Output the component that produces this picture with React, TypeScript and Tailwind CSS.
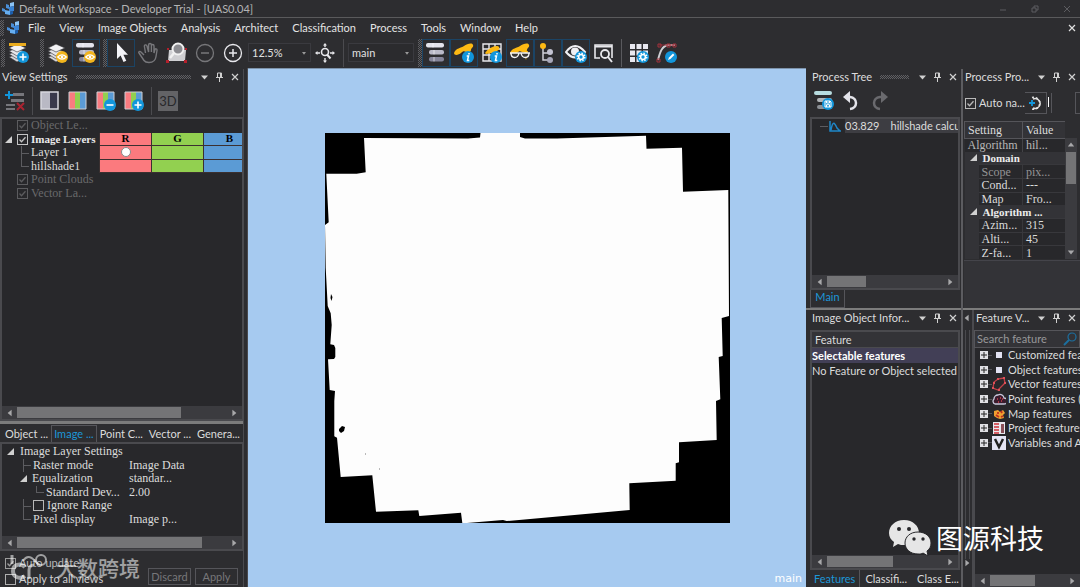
import type { ReactNode } from 'react';

const menus = ['File', 'View', 'Image Objects', 'Analysis', 'Architect', 'Classification', 'Process', 'Tools', 'Window', 'Help'];

const BLUE = '#1296db';

function Logo({ className = '' }: { className?: string }) {
  return (
    <svg viewBox="0 0 14 14" className={`shrink-0 ${className}`}>
      <path d="M4 2l3 1v4l-3-1zM0 6l3 1v3L0 9z" fill="#4a8fd8" />
      <path d="M8 1l4-1v4L8 5z" fill="#8cc4f5" />
      <path d="M7 5l5-1v5L7 10z" fill="#3a84d6" />
      <path d="M3 8l5 1v4l-5-1z" fill="#66aef0" />
      <path d="M8 10l3-1v3l-3 1z" fill="#1c5fae" />
    </svg>
  );
}

function Badge({ x, y, kind }: { x: number; y: number; kind: 'plus' | 'minus' | 'info' | 'gear' | 'pen' | 'eye' | 'save' }) {
  return (
    <g transform={`translate(${x} ${y})`}>
      <circle r="6" fill={kind === 'eye' ? '#f2b51d' : BLUE} />
      {kind === 'plus' && <path d="M-3.5 0h7M0-3.5v7" stroke="#fff" strokeWidth="1.6" />}
      {kind === 'minus' && <path d="M-3.5 0h7" stroke="#fff" strokeWidth="1.6" />}
      {kind === 'info' && <path d="M1-4v1.6M-1.3-1h1.8L-.5 3.4h1.8" stroke="#fff" strokeWidth="1.5" fill="none" />}
      {kind === 'gear' && (
        <>
          <circle r="2.4" fill="none" stroke="#fff" strokeWidth="1.5" />
          <circle r="3.8" fill="none" stroke="#fff" strokeWidth="1.4" strokeDasharray="1.5 1.48" />
        </>
      )}
      {kind === 'pen' && <path d="M-3 3l1-2.4L2-3.4 3.4-2-.6 2z" fill="#fff" />}
      {kind === 'eye' && (
        <>
          <path d="M-4.3 0Q0-4.4 4.3 0 0 4.4-4.3 0z" fill="none" stroke="#fff" strokeWidth="1.2" />
          <circle r="1.3" fill="#fff" />
        </>
      )}
      {kind === 'save' && <path d="M-3-3h5l1 1v5h-6zM-1.5-3v2h3v-2M-1.5 3V.7h3V3" fill="none" stroke="#fff" />}
    </g>
  );
}

function Icon({ children, className = '' }: { children: ReactNode; className?: string }) {
  return (
    <svg viewBox="0 0 22 22" className={`size-[22px] shrink-0 ${className}`} fill="none">
      {children}
    </svg>
  );
}

function Layers({ top }: { top?: boolean }) {
  return (
    <>
      <path d="M1 15l8-3 8 4-8 4z" fill="#d5d5da" stroke="#2d2d30" strokeWidth=".6" />
      <path d="M1 12l8-3 8 4-8 4z" fill="#dedee3" stroke="#2d2d30" strokeWidth=".6" />
      <path d="M1 9l8-3 8 4-8 4z" fill="#e6e6ea" stroke="#2d2d30" strokeWidth=".6" />
      <path d="M1 6l8-4 9 4-9 4z" fill="#f2f2f5" stroke="#2d2d30" strokeWidth=".6" />
      {top && <path d="M1 1h17v3H1z" fill="#e9ab1e" />}
    </>
  );
}

function Bars() {
  return (
    <>
      <rect x="1" y="1" width="18" height="4.5" rx="2" fill="#e4e4ec" />
      <rect x="4" y="8" width="15" height="4.5" rx="2" fill="#b9b9c8" />
      <rect x="4" y="15" width="15" height="4.5" rx="2" fill="#85859a" />
      <path d="M8 1v4.5M9 8v4.5M9 15v4.5" stroke="#fff" strokeOpacity=".6" />
    </>
  );
}

const brush = <path d="M1 11C3 6 8 6 11 4s8-4 9-1c1 2-2 3-2 5s-3 3-5 2-3-1-5 1-7 3-7 0z" fill="#fdb913" />;

const icons = {
  addLayers: <><Layers top /><Badge x={15} y={15} kind="plus" /></>,
  viewLayers: <><Layers /><Badge x={15} y={15} kind="eye" /></>,
  viewBars: <><Bars /><Badge x={15} y={15} kind="eye" /></>,
  cursor: <path d="M7 1v16l3.6-3.4L13.5 20l2.8-1.3-2.9-6H18z" fill="#f4f4f8" />,
  hand: (
    <path
      d="M6 13l-3-3c-1-1.3-3-.3-2 1l5 7.500c1 1.500 2.500 2 5 2 4 0 6.500-2 7-6l1-6c.3-2-1.800-2.300-2.200-.5L16 11V4c0-2-2.600-2-2.600 0v6V3c0-2-2.800-2-2.800 0v7L9 4c-.4-1.800-2.900-1.300-2.600.5L7.500 11"
      stroke="#77777b"
      strokeWidth="1.4"
    />
  ),
  zoomBox: (
    <>
      <path d="M3 8h17l-1 11H2z" fill="#cfcfd2" />
      <circle cx="12" cy="7" r="5.5" stroke="#f1f1f1" strokeWidth="2" fill="#8b8b90" />
      <path d="M8 11l-4 5" stroke="#f1f1f1" strokeWidth="2.5" />
      <path d="M1 6h2v2H1zM19 6h2v2h-2zM0 18h3v3H0zM18 18h3v3h-3z" fill="#b3202c" />
    </>
  ),
  zoomOut: <><circle cx="11" cy="11" r="8.5" stroke="#77777a" strokeWidth="1.3" /><path d="M7 11h8" stroke="#77777a" strokeWidth="1.5" /></>,
  zoomIn: <><circle cx="11" cy="11" r="8.5" stroke="#e8e8ec" strokeWidth="1.3" /><path d="M7 11h8M11 7v8" stroke="#e8e8ec" strokeWidth="1.5" /></>,
  pan: (
    <>
      <circle cx="11" cy="10" r="3.5" stroke="#e8e8ec" strokeWidth="1.6" />
      <path d="M13 12.500l3.500 4" stroke="#e8e8ec" strokeWidth="2" />
      <path d="M11 1l2 2.500H9zM11 21l2-2.500H9zM1 11l2.500-2v4zM21 11l-2.500-2v4z" fill="#e8e8ec" />
      <path d="M11 3v2M11 16v3M3 11h3M16 11h3" stroke="#e8e8ec" strokeWidth="1.4" />
    </>
  ),
  bars: <Bars />,
  brushInfo: <>{brush}<Badge x={15} y={15} kind="info" /></>,
  gridInfo: (
    <>
      <path d="M2 2h18v17H2zM2 7h18M2 13h18M8 2v17M14 2v17" stroke="#e8e8ec" strokeWidth="1.4" />
      <path d="M4 11C7 6 16 2 18 5s-4 6-13 7z" fill="#fdb913" />
      <Badge x={15} y={15} kind="info" />
    </>
  ),
  brushGlasses: (
    <>
      {brush}
      <path d="M15 9l2 9 2-9z" fill="#fdb913" />
      <path d="M1 11h20M2 11c0 6 7 6 8 0M12 11c1 6 8 6 8 0" stroke="#f4f4f4" strokeWidth="1.4" fill="#3a3936" />
    </>
  ),
  tree: (
    <>
      <path d="M6 5v13h8M6 11h8" stroke="#d0d0d8" strokeWidth="1.5" />
      <circle cx="6" cy="4" r="3" fill="#fdb913" />
      <circle cx="13" cy="10" r="3" fill="#c3c3d2" />
      <circle cx="13" cy="18" r="3" fill="#a8a8ba" />
    </>
  ),
  eyeGear: (
    <>
      <path d="M1 10Q10-2 20 10 10 21 1 10z" stroke="#f0f0f4" strokeWidth="2" />
      <circle cx="10" cy="9.5" r="4" fill="#f0f0f4" />
      <Badge x={16} y={15} kind="gear" />
    </>
  ),
  windowSearch: (
    <>
      <path d="M7 16H2V3h17v13" stroke="#e8e8ec" strokeWidth="1.6" />
      <path d="M2 4.500h17" stroke="#e8e8ec" strokeWidth="2" />
      <circle cx="12" cy="12" r="4" stroke="#e8e8ec" strokeWidth="1.8" />
      <path d="M15 15l4 5" stroke="#e8e8ec" strokeWidth="2" />
    </>
  ),
  gridGear: (
    <>
      <path d="M2 2h5v5H2zM8.500 2h5v5h-5zM15 2h5v5h-5zM2 8.500h5v5H2zM8.500 8.500h5v5h-5zM15 8.500h5v5h-5zM2 15h5v5H2zM8.500 15h5v5h-5z" fill="#e8e8f0" />
      <Badge x={15} y={15} kind="gear" />
    </>
  ),
  curve: (
    <>
      <path d="M2 18C4 10 6 4 12 3h7" stroke="#cfcfd4" strokeWidth="2" />
      <path d="M3 3h16" stroke="#8d2b34" />
      <path d="M2 2h3v3H2zM11 2h3v3h-3zM17 2h3v3h-3zM1 17h3v3H1z" stroke="#a5323c" />
      <Badge x={15} y={15} kind="pen" />
    </>
  ),
  editRows: (
    <>
      <path d="M9 3h11v3H9zM7 9h13v3H7zM2 14h9v2H2zM2 18h9v2H2z" fill="#77777c" />
      <path d="M1 5h8M5 1v8" stroke={BLUE} strokeWidth="2" />
      <path d="M13 13l7 7M20 13l-7 7" stroke="#a92330" strokeWidth="2" />
    </>
  ),
  halfGrey: <><path d="M2 2h9v17H2z" fill="#b9b9c4" /><path d="M11 2h8v17h-8z" fill="#3a3a4c" /><path d="M2 2h17v17H2z" stroke="#d8d8de" strokeWidth="1.5" /></>,
  rgb: <Rgb />,
  rgbMinus: <><Rgb /><Badge x={15} y={15} kind="minus" /></>,
  rgbPlus: <><Rgb /><Badge x={15} y={15} kind="plus" /></>,
  barsSave: (
    <>
      <rect x="1" y="1" width="18" height="4" rx="2" fill="#b7dce0" />
      <rect x="4" y="8" width="15" height="4" rx="2" fill="#b0b4b8" />
      <rect x="4" y="15" width="12" height="4" rx="2" fill="#8c9096" />
      <Badge x={15} y={14} kind="save" />
    </>
  ),
  undo: <><path d="M9 19c8-1 8-11 0-12H5" stroke="#e4e4ea" strokeWidth="2.5" /><path d="M9 1v12L2 7z" fill="#e4e4ea" /></>,
  redo: <><path d="M11 19c-8-1-8-11 0-12h4" stroke="#6a6a6e" strokeWidth="2.5" /><path d="M12 1v12l7-6z" fill="#6a6a6e" /></>,
};

type IconName = keyof typeof icons;

function Rgb() {
  return (
    <>
      <path d="M2 2h6v17H2z" fill="#f97b80" />
      <path d="M8 2h5v17H8z" fill="#92d050" />
      <path d="M13 2h6v17h-6z" fill="#5b9bd5" />
      <path d="M2 2h17v17H2z" stroke="#cfcfd4" />
    </>
  );
}

function ToolButton({ name, on = false, label }: { name: IconName; on?: boolean; label: string }) {
  return (
    <button type="button" aria-label={label} className={`flex h-7 w-7 shrink-0 items-center justify-center border ${on ? 'border-[#1b4465]' : 'border-transparent'}`}>
      <Icon>{icons[name]}</Icon>
    </button>
  );
}

function Dots({ className = '' }: { className?: string }) {
  return <span className={`bg-[conic-gradient(#606064_25%,transparent_0_50%,#606064_0_75%,transparent_0)] bg-[size:2px_2px] ${className}`} />;
}

function Grip() {
  return <Dots className="h-7 w-1 shrink-0" />;
}

function Combo({ value, label, className = '' }: { value: string; label: string; className?: string }) {
  return (
    <span className={`relative mt-1 flex h-[19px] shrink-0 border border-[#3a3a3f] bg-[#2b2b2e] ${className}`}>
      <select aria-label={label} defaultValue={value} className="w-full appearance-none bg-transparent pl-[3px] leading-4 text-[#e0e0e0]">
        <option>{value}</option>
      </select>
      <svg viewBox="0 0 6 4" className="pointer-events-none absolute top-2 right-1 w-1">
        <path d="M0 0h6L3 4z" fill="#9a9a9a" />
      </svg>
    </span>
  );
}

function PanelHeader({ title, dots = false }: { title: string; dots?: boolean }) {
  return (
    <header className="flex h-4 shrink-0 items-center pr-[3px] pl-[2px]">
      <h2 className="whitespace-nowrap">{title}</h2>
      <span className="flex h-1 min-w-0 flex-1">{dots && <Dots className="mx-2 flex-1" />}</span>
      <span className="flex shrink-0 gap-1">
        <button type="button" aria-label="Menu">
          <svg viewBox="0 0 11 10" className="w-[11px]"><path d="M2 3.500h7L5.500 7.500z" fill="#d0d0d0" /></svg>
        </button>
        <button type="button" aria-label="Pin">
          <svg viewBox="0 0 11 10" className="w-[11px]" fill="none" stroke="#d0d0d0"><path d="M3.500 1h4v4.500h-4zM2 5.500h7M5.500 5.500V10M6.500 1v4.500" /></svg>
        </button>
        <button type="button" aria-label="Close">
          <svg viewBox="0 0 11 10" className="w-[11px]" fill="none" stroke="#d0d0d0" strokeWidth="1.2"><path d="M3 2l6 6M9 2L3 8" /></svg>
        </button>
      </span>
    </header>
  );
}

function Arrow({ dir }: { dir: 'left' | 'right' | 'up' | 'down' }) {
  const d = { left: 'M7 1L2 5l5 4z', right: 'M3 1l5 4-5 4z', up: 'M1 7l4-5 4 5z', down: 'M1 3l4 5 4-5z' }[dir];
  return <svg viewBox="0 0 10 10" className="size-2 shrink-0"><path d={d} fill="#a8a8aa" /></svg>;
}

function HScroll({ thumb }: { thumb: string }) {
  return (
    <div className="flex h-[13px] shrink-0 items-center gap-[3px] bg-[#3b3b3f] px-1">
      <Arrow dir="left" />
      <div className="h-[11px] flex-1"><div className={`h-full bg-[#747476] ${thumb}`} /></div>
      <Arrow dir="right" />
    </div>
  );
}

function Tick({ label, checked = false, className = '' }: { label: string; checked?: boolean; className?: string }) {
  return (
    <label className={`flex items-center gap-[3px] whitespace-nowrap ${className}`}>
      <span className="relative flex size-[11px] shrink-0 opacity-80">
        <input type="checkbox" defaultChecked={checked} className="peer size-[11px] appearance-none border border-current" />
        <svg viewBox="0 0 11 11" className="pointer-events-none absolute inset-0 hidden peer-checked:block" fill="none" stroke="currentColor" strokeWidth="1.3">
          <path d="M2.500 5.500l2 2.200 4-4.500" />
        </svg>
      </span>
      {label}
    </label>
  );
}

function Caret() {
  return <svg viewBox="0 0 7 7" className="size-[7px] shrink-0"><path d="M7 0v7H0z" fill="#d0d0d0" /></svg>;
}

// connector line of a tree row; the last row of a branch ends at its middle
function Branch({ last = false }: { last?: boolean }) {
  return (
    <span className="relative h-full w-[10px] shrink-0">
      <span className={`absolute top-0 left-0 border-l border-[#5c5c60] ${last ? 'h-1/2' : 'h-full'}`} />
      <span className="absolute top-1/2 left-0 w-2 border-t border-[#5c5c60]" />
    </span>
  );
}

function LayerRow({ head, children, dot }: { head?: boolean; children: ReactNode; dot?: boolean }) {
  const cell = 'flex w-[52px] shrink-0 items-center justify-center border-b border-l border-[#3b3030] text-[11px] font-bold text-black';
  return (
    <div className="flex flex-1 overflow-hidden">
      <div className="flex w-[97px] shrink-0 items-center overflow-hidden whitespace-nowrap">{children}</div>
      <div className={`${cell} bg-[#fb7a7e]`}>
        {head && 'R'}
        {dot && <input type="radio" name="red" aria-label="Layer 1 red" defaultChecked className="size-[10px] appearance-none rounded-full border border-[#8a8a8a] bg-white" />}
      </div>
      <div className={`${cell} bg-[#92d050]`}>{head && 'G'}</div>
      <div className={`${cell} bg-[#5b9bd5]`}>{head && 'B'}</div>
    </div>
  );
}

function ViewSettings() {
  const tabs = ['Object ...', 'Image ...', 'Point C...', 'Vector ...', 'Genera...'];
  return (
    <aside className="flex w-[244px] shrink-0 flex-col border-r border-[#4a4a4e]">
      <PanelHeader title="View Settings" dots />
      <div className="flex h-8 shrink-0 items-center pl-px">
        <ToolButton name="editRows" label="Edit layers" />
        <span className="mx-[3px] h-7 border-l border-[#4b4b4f]" />
        <ToolButton name="halfGrey" label="Single layer" />
        <ToolButton name="rgb" label="Mix layers" />
        <ToolButton name="rgbMinus" label="Previous layer" />
        <ToolButton name="rgbPlus" label="Next layer" />
        <span className="mx-[3px] h-7 border-l border-[#4b4b4f]" />
        <button type="button" className="ml-[3px] size-5 bg-[#636366] text-[13px] leading-5 text-[#28282b]">3D</button>
      </div>
      <section className="flex flex-1 flex-col border-2 border-r border-[#4a4a4e] bg-[#28282b]">
        <div className="flex h-[81px] shrink-0 flex-col font-['Liberation_Serif',serif] text-[12px] leading-[13px]">
          <div className="flex flex-1 items-center pl-[15px] text-[#6a6a6c]"><Tick label="Object Le..." checked /></div>
          <LayerRow head>
            <span className="flex w-[15px] pl-[3px]"><Caret /></span>
            <Tick label="Image Layers" checked className="text-[11px] font-bold text-[#ececec]" />
          </LayerRow>
          <LayerRow dot><span className="w-[19px] shrink-0" /><Branch />Layer 1</LayerRow>
          <LayerRow><span className="w-[19px] shrink-0" /><Branch last />hillshade1</LayerRow>
          <div className="flex flex-1 items-center pl-[15px] text-[#6a6a6c]"><Tick label="Point Clouds" checked /></div>
          <div className="flex flex-1 items-center pl-[15px] text-[#6a6a6c]"><Tick label="Vector La..." checked /></div>
        </div>
        <div className="flex-1" />
        <HScroll thumb="w-[78%]" />
      </section>
      <div className="h-[3px] shrink-0 bg-[#7c7c7c]" />
      <div role="tablist" className="flex h-[18px] shrink-0 pt-px pl-[2px] whitespace-nowrap">
        {tabs.map((tab, i) => (
          <button
            key={tab}
            type="button"
            role="tab"
            aria-selected={i === 1}
            className={`flex-auto border border-b-0 ${i === 1 ? 'border-[#55555a] text-[#1c97d8]' : 'border-transparent'}`}
          >
            {tab}
          </button>
        ))}
      </div>
      <section className="flex h-[109px] shrink-0 flex-col border-2 border-r border-[#4a4a4e] bg-[#28282b]">
        <div className="mt-px flex h-[81px] flex-col font-['Liberation_Serif',serif] text-[12px] leading-[13px] whitespace-nowrap">
          <div className="flex flex-1 items-center gap-[6px] pl-[5px]"><Caret />Image Layer Settings</div>
          <div className="flex flex-1 items-center pl-[21px]"><Branch /><span className="w-24">Raster mode</span>Image Data</div>
          <div className="flex flex-1 items-center gap-[3px] pl-[18px]"><Caret /><span className="ml-[2px] w-[94px]">Equalization</span>standar...</div>
          <div className="flex flex-1 items-center pl-[34px]"><Branch last /><span className="w-[83px]">Standard Dev...</span>2.00</div>
          <div className="flex flex-1 items-center pl-[21px]"><Branch /><Tick label="Ignore Range" /></div>
          <div className="flex flex-1 items-center pl-[21px]"><Branch last /><span className="w-24">Pixel display</span>Image p...</div>
        </div>
        <div className="flex-1" />
        <HScroll thumb="w-[88%]" />
      </section>
      <footer className="relative flex h-9 shrink-0 items-end gap-1 pr-[5px] pl-[5px]">
        <div className="flex flex-1 flex-col">
          <Tick label="Auto update" checked className="text-[#b8b8b8]" />
          <Tick label="Apply to all views" className="text-[#d0d0d0]" />
        </div>
        <button type="button" className="mb-[2px] h-[17px] w-[43px] border border-[#55555a] leading-[15px] text-[#77777a]">Discard</button>
        <button type="button" className="mb-[2px] h-[17px] w-[43px] border border-[#55555a] leading-[15px] text-[#77777a]">Apply</button>
        <div className="pointer-events-none absolute top-[2px] left-[10px] flex items-center gap-2 text-white/55">
          <svg viewBox="0 0 38 26" className="w-[38px]" fill="none" stroke="currentColor">
            <path d="M2 1v9" strokeWidth="3" />
            <path d="M15 13C10 8 3 11 3 17s7 9 12 5" strokeWidth="4" />
            <path d="M19 25v-9q0-5 5-5" strokeWidth="3" />
            <circle cx="31" cy="6" r="5" strokeWidth="2" />
            <path d="M13 7q5-8 12 0 2 3 5 4" strokeWidth="2" />
          </svg>
          <span className="font-['Noto_Sans_CJK_SC',sans-serif] text-[21px] leading-7 font-medium">大数跨境</span>
        </div>
      </footer>
    </aside>
  );
}

function MapView() {
  return (
    <main className="relative flex min-w-0 flex-1 items-center justify-center border-t border-[#7d93ab] bg-[#a6caf0]">
      <svg viewBox="0 0 405 390" className="w-[405px]">
        <path d="M0 0h405v390H0z" fill="#000" />
        <path
          fill="#fdfdfd"
          d="M39 5L143 5.500 155 4.500 155.500 0H195V4L200 5.500H232L321 2.700 321.500 15.700 357 14.700 358 58.700 403.300 57 404 183 396.700 185 397.700 223 393.700 224 395.300 266.300 391 268 391.700 307 354 309.300V329.300L350.700 330.300V347.700L304.300 350.300 304.700 377 181.700 388 178 387 142 390H137.300L136 379.700 94.300 383 93.300 377.300 51 378.700 47.300 342.300 15.700 344 12 304.700 9.300 303.300V268L10 258 4.700 257 3 226.300 9 226 10.300 224V215L9 212 5.300 211.300 6.700 192 5.700 180.300 2.700 173 .7 135 0 92 3.700 89.300 1.300 40.700H31.700L40.700 39.300z"
        />
        <path d="M6 161l1.500 3-1 4-1-3zM14 296l3-3 3 1-1 4-3 2-2-2z" fill="#000" />
        <path d="M40 321h1M54 336h1" stroke="#777" />
      </svg>
      <span className="absolute right-1 bottom-0 font-['DejaVu_Sans',sans-serif] text-[11px] leading-4 text-white">main</span>
    </main>
  );
}

function ProcessTree() {
  return (
    <section className="flex h-[239px] shrink-0 flex-col pl-1">
      <PanelHeader title="Process Tree" dots />
      <div className="flex h-8 shrink-0 items-center">
        <ToolButton name="barsSave" label="Save rule set" />
        <ToolButton name="undo" label="Undo" />
        <ToolButton name="redo" label="Redo" />
      </div>
      <div className="mr-px flex flex-1 flex-col border-2 border-[#4a4a4e] bg-[#28282b]">
        <div className="flex h-[14px] items-center overflow-hidden whitespace-nowrap">
          <span className="ml-2 w-2 shrink-0 border-t border-[#5c5c60]" />
          <svg viewBox="0 0 12 11" className="ml-px w-3 shrink-0" fill="none" stroke="#1e86c8" strokeWidth="1.5"><path d="M1 0v10h11M2 9c2-11 4-6 6-2l3 3" /></svg>
          <span className="ml-1 flex flex-1 gap-[11px] bg-[#3d3d42] leading-[14px]"><span>03.829</span><span>hillshade calcu</span></span>
        </div>
        <div className="flex-1" />
        <HScroll thumb="w-1/3" />
      </div>
      <button type="button" className="h-[18px] w-[35px] shrink-0 border border-t-0 border-[#55555a] pb-1 leading-[13px] text-[#1c97d8]">Main</button>
    </section>
  );
}

function ObjectInfo() {
  return (
    <section className="flex min-h-0 flex-1 flex-col border-t-2 border-[#7c7c7c] pl-1">
      <PanelHeader title="Image Object Infor..." />
      <div className="mt-1 mr-px flex flex-1 flex-col overflow-hidden border-2 border-[#4a4a4e] bg-[#28282b]">
        <table className="w-full text-left leading-[15px] whitespace-nowrap">
          <thead><tr><th className="border-b border-[#4a4a4e] bg-[#333337] pl-[3px] font-normal">Feature</th></tr></thead>
          <tbody>
            <tr><td className="bg-[#423f56] font-bold text-white">Selectable features</td></tr>
            <tr><td>No Feature or Object selected</td></tr>
          </tbody>
        </table>
        <div className="flex-1" />
        <HScroll thumb="w-[57%]" />
      </div>
      <div role="tablist" className="flex h-[17px] shrink-0 whitespace-nowrap">
        <button type="button" role="tab" aria-selected className="border-r border-[#55555a] px-1 text-[#1c97d8]">Features</button>
        <button type="button" role="tab" aria-selected={false} className="px-[5px]">Classifi...</button>
        <button type="button" role="tab" aria-selected={false} className="px-[5px]">Class E...</button>
      </div>
    </section>
  );
}

const props: { name: string; value?: string; group?: boolean; dim?: boolean }[] = [
  { name: 'Domain', group: true },
  { name: 'Scope', value: 'pix...', dim: true },
  { name: 'Cond...', value: '---' },
  { name: 'Map', value: 'Fro...' },
  { name: 'Algorithm ...', group: true },
  { name: 'Azim...', value: '315' },
  { name: 'Alti...', value: '45' },
  { name: 'Z-fa...', value: '1' },
];

function ProcessProperties() {
  return (
    <section className="flex h-[239px] shrink-0 flex-col">
      <PanelHeader title="Process Pro..." />
      <div className="flex h-9 shrink-0 items-center overflow-hidden pl-[2px]">
        <Tick label="Auto na..." checked />
        <button type="button" aria-label="Edit algorithm" className="flex h-[22px] w-[22px] shrink-0 items-center justify-center border border-l-0 border-[#55555a]">
          <svg viewBox="0 0 14 14" className="w-[14px]" fill="none">
            <path d="M5 3a5 5 0 1 1 0 9" stroke="#e4e4e4" strokeWidth="1.5" />
            <path d="M4 1.500a6 6 0 1 1 0 11.500" stroke="#e4e4e4" strokeWidth="1.5" strokeDasharray="2 2" />
            <path d="M1 7h6M4 4v6" stroke={BLUE} strokeWidth="1.8" />
          </svg>
        </button>
        <span className="flex h-5 w-[5px] border-r border-[#55555a] pt-1"><span className="ml-px h-[10px] border-l border-white" /></span>
        <span className="ml-auto h-[22px] w-[5px] border border-r-0 border-[#55555a]" />
      </div>
      <div className="ml-px flex font-['Liberation_Serif',serif] text-[12px] leading-3 whitespace-nowrap">
        <table className="h-[138px] w-0 flex-1 table-fixed text-left">
          <colgroup>
            <col className="w-[14px]" />
            <col className="w-11" />
            <col />
          </colgroup>
          <thead>
            <tr className="h-[17px]">
              <th colSpan={2} className="border border-[#55555a] bg-[#333337] pl-[3px] font-normal">Setting</th>
              <th className="border border-r-0 border-[#55555a] bg-[#333337] pl-[3px] font-normal">Value</th>
            </tr>
          </thead>
          <tbody>
            <tr className="bg-[#28282b] text-[#b8b8b8]"><td colSpan={2} className="pl-[3px]">Algorithm</td><td className="border-l border-[#444448] pl-[3px]">hil...</td></tr>
            {props.map((p) =>
              p.group ? (
                <tr key={p.name} className="bg-[#333337] font-bold text-[#ececec]">
                  <td colSpan={3}><span className="flex items-center gap-[6px] pl-[5px] text-[11px]"><Caret />{p.name}</span></td>
                </tr>
              ) : (
                <tr key={p.name} className={p.dim ? 'bg-[#28282b] text-[#949496]' : 'bg-[#28282b]'}>
                  <td className="bg-[#333337]" />
                  <td className="border-t border-[#38383c] pl-[3px]">{p.name}</td>
                  <td className="border-t border-l border-[#38383c] pl-[3px]">{p.value}</td>
                </tr>
              ),
            )}
          </tbody>
        </table>
        <div className="mt-[17px] mr-[3px] flex w-3 shrink-0 flex-col items-center bg-[#3b3b3f] py-[3px]">
          <Arrow dir="up" />
          <div className="mt-[3px] h-8 w-[10px] bg-[#747476]" />
          <div className="flex-1" />
          <Arrow dir="down" />
        </div>
      </div>
      <div className="mt-px ml-px flex-1 border-t border-[#44444a] bg-[#333337]" />
    </section>
  );
}

const featureIcons: ReactNode[] = [
  <path key="a" d="M4 4h6v6H4z" fill="#e2e2f2" />,
  <path key="b" d="M4 4h6v6H4z" fill="#e2e2f2" />,
  <g key="c"><path d="M6 2l6-1 1 5-7 7-5-2 1-6z" stroke="#c04048" strokeWidth="1.3" /><path d="M5 1h2v2H5zM11 0h2v2h-2zM12 5h2v2h-2zM6 12h2v2H6zM0 10h2v2H0zM1 5h2v2H1z" fill="#e05058" /></g>,
  <g key="d"><path d="M3 12a3 3 0 0 1-1-5 4 4 0 0 1 4-4 4 4 0 0 1 6 3 3 3 0 0 1 0 6z" stroke="#c8c8dc" strokeWidth="1.3" fill="#3a1c2c" /><path d="M5 7h1M8 6h1M6 10h1M9 9h1M10 7h1" stroke="#d04050" strokeWidth="1.5" /></g>,
  <g key="e"><path d="M2 4l4-1 2 2 3-2 2 3-2 2 1 3-4 1-3-1-3-2z" fill="#f0a030" /><path d="M4 8l3 2M9 4l1 2M6 5v2M11 9l-2 1" stroke="#c03020" strokeWidth="1.8" /></g>,
  <g key="f"><path d="M1 1h12v12H1z" fill="#e8e8ee" /><path d="M2 3h5M2 6h5M2 9h5M2 12h5" stroke="#d03038" strokeWidth="1.5" /><path d="M9 3h3v9H9z" fill="#8a5058" /></g>,
  <g key="g"><path d="M0 0h14v14H0z" fill="#e4e4f4" /><path d="M3 3l4 8 4-8" stroke="#222" strokeWidth="2.5" /></g>,
];

const features = ['Customized features', 'Object features', 'Vector features', 'Point features (Point clouds)', 'Map features', 'Project features', 'Variables and Arrays'];

function FeatureView() {
  return (
    <div className="flex min-h-0 flex-1 border-t-2 border-[#7c7c7c]">
      <div className="flex w-[11px] shrink-0 flex-col border-r-2 border-[#4a4a4e] pt-1">
        <Arrow dir="left" />
        <span className="mx-[2px] mt-2 flex-1 border-x border-[#4a4a4e]" />
        <Arrow dir="right" />
        <span className="h-5 shrink-0" />
      </div>
      <section className="flex min-w-0 flex-1 flex-col">
        <PanelHeader title="Feature V..." />
        <label className="mt-1 flex h-[18px] shrink-0 items-center border border-[#55555a] bg-[#333337] px-[2px]">
          <input type="text" aria-label="Search feature" placeholder="Search feature" className="min-w-0 flex-1 bg-transparent placeholder:text-[#98989a]" />
          <svg viewBox="0 0 14 14" className="w-[14px]" fill="none" stroke="#1c6f9f"><circle cx="9" cy="5" r="4" strokeWidth="1.2" /><path d="M6 8l-5 5" strokeWidth="2" /></svg>
        </label>
        <div className="flex flex-1 flex-col overflow-hidden border-l border-[#4a4a4e] bg-[#28282b]">
          <ul className="flex h-[102px] shrink-0 flex-col leading-[14px]">
            {features.map((name, i) => (
              <li key={name} className="flex min-h-0 flex-1 items-center whitespace-nowrap">
                <svg viewBox="0 0 8 8" className="ml-[5px] size-2 shrink-0"><path d="M0 0h8v8H0z" fill="#e0e0e4" /><path d="M4 1v6M1 4h6" stroke="#222" /></svg>
                <span className="w-1 shrink-0 border-t border-[#55555a]" />
                <svg viewBox="0 0 14 14" className="mr-[2px] size-[14px] shrink-0" fill="none">{featureIcons[i]}</svg>
                {name}
              </li>
            ))}
          </ul>
          <div className="flex-1" />
          <HScroll thumb="w-[60%]" />
        </div>
      </section>
    </div>
  );
}

export default function App() {
  return (
    <div className="relative flex h-screen flex-col overflow-hidden bg-[#2d2d30] font-['Lato','Open_Sans',sans-serif] text-[11px] leading-4 text-[#dcdcdc]">
      <header className="flex h-[18px] shrink-0 items-center border-b border-[#5a5a5c] pr-2 pl-[2px] text-[#b4b4b4]">
        <Logo className="w-[14px]" />
        <h1 className="ml-[3px] flex-1">Default Workspace - Developer Trial - [UAS0.04]</h1>
        <svg viewBox="0 0 74 8" className="w-[74px]" fill="none" stroke="#5c5c60"><path d="M2 5h6M34 3h4v4h-4zM36 3V1h4v4h-2M66 1l6 6M72 1l-6 6" /></svg>
      </header>
      <nav className="flex h-[19px] shrink-0 items-center pr-1">
        <Dots className="h-4 w-1" />
        <Logo className="ml-[3px] w-[14px]" />
        <div className="ml-[7px] flex flex-1 gap-[14px] text-[#e4e4e4]">
          {menus.map((m) => <button key={m} type="button">{m}</button>)}
        </div>
        <button type="button" aria-label="Close workspace"><svg viewBox="0 0 8 8" className="size-2" stroke="#e0e0e0" strokeWidth="1.2"><path d="M1 1l6 6M7 1L1 7" /></svg></button>
      </nav>
      <div className="flex h-[31px] shrink-0 items-start pt-[2px] pl-px">
        <Grip />
        <ToolButton name="addLayers" label="Add layers" />
        <span className="w-[7px]" />
        <Grip />
        <ToolButton name="viewLayers" label="View layers" />
        <ToolButton name="viewBars" on label="View settings" />
        <span className="w-[3px]" />
        <Grip />
        <ToolButton name="cursor" on label="Select" />
        <ToolButton name="hand" label="Pan" />
        <ToolButton name="zoomBox" label="Zoom area" />
        <ToolButton name="zoomOut" label="Zoom out" />
        <ToolButton name="zoomIn" label="Zoom in" />
        <Combo value="12.5%" label="Zoom" className="ml-px w-[63px]" />
        <ToolButton name="pan" label="Fit window" />
        <span className="mx-1 h-7 border-l border-[#4b4b4f]" />
        <Combo value="main" label="Map" className="mr-1 w-[66px]" />
        <Grip />
        <ToolButton name="bars" on label="Process tree" />
        <ToolButton name="brushInfo" on label="Object information" />
        <ToolButton name="gridInfo" label="Object table" />
        <ToolButton name="brushGlasses" on label="Feature view" />
        <ToolButton name="tree" on label="Class hierarchy" />
        <ToolButton name="eyeGear" on label="View options" />
        <ToolButton name="windowSearch" label="Find" />
        <span className="mx-[3px] h-7 border-l border-[#5a5a5e]" />
        <ToolButton name="gridGear" label="Manage" />
        <ToolButton name="curve" label="Edit vectors" />
      </div>
      <div className="flex min-h-0 flex-1">
        <div className="flex shrink-0 border-r border-[#4a4a4e] pt-px pr-[3px]"><ViewSettings /></div>
        <MapView />
        <div className="flex w-[274px] shrink-0 pt-px">
          <div className="flex w-[157px] shrink-0 flex-col border-r-2 border-[#5c5c60]"><ProcessTree /><ObjectInfo /></div>
          <div className="flex min-w-0 flex-1 flex-col"><ProcessProperties /><FeatureView /></div>
        </div>
      </div>
      <div className="pointer-events-none absolute right-9 bottom-[30px] flex items-center gap-1 text-white">
        <svg viewBox="0 0 44 38" className="w-11">
          <path d="M16 1C7 1 1 7 1 14c0 4 2 7 5 9l-1 5 5-3c2 1 4 1 6 1 9 0 15-5 15-12S25 1 16 1z" fill="#e6e6e6" />
          <path d="M30 13c-8 0-13 5-13 11s5 11 13 11c2 0 4 0 5-1l5 3-1-5c3-2 4-5 4-8 0-6-5-11-13-11z" fill="#e6e6e6" stroke="#28282b" />
          <g fill="#28282b"><circle cx="11" cy="10" r="2" /><circle cx="21" cy="10" r="2" /><circle cx="26" cy="20" r="1.7" /><circle cx="35" cy="20" r="1.7" /></g>
        </svg>
        <span className="font-['Noto_Sans_CJK_SC',sans-serif] text-[27px] leading-9">图源科技</span>
      </div>
    </div>
  );
}
